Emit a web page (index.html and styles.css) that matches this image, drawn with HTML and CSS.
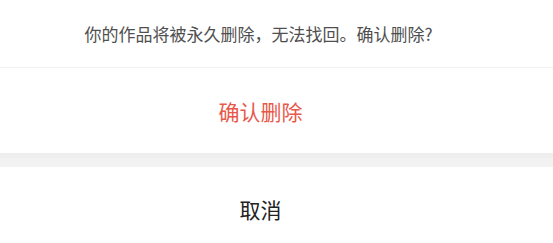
FILE: index.html
```html
<!DOCTYPE html>
<html lang="zh-CN">
<head>
<meta charset="utf-8">
<link rel="stylesheet" href="styles.css">
</head>
<body>
<div class="sheet">
  <div class="message">你的作品将被永久删除，无法找回。确认删除?</div>
  <div class="action danger">确认删除</div>
  <div class="gap"></div>
  <div class="action cancel">取消</div>
</div>
</body>
</html>
```
FILE: styles.css
```css
html, body {
  margin: 0;
  padding: 0;
  background: #fff;
}
.sheet {
  display: flex;
  flex-direction: column;
  font-family: "Noto Sans CJK SC", "Noto Sans", sans-serif;
}
.message {
  height: 67px;
  display: flex;
  align-items: center;
  justify-content: center;
  padding-right: 36px;
  font-size: 17px;
  color: #4f4f4f;
  border-bottom: 1px solid #f1f1f1;
}
.action {
  display: flex;
  align-items: center;
  justify-content: center;
  padding-right: 32px;
  font-size: 21px;
}
.danger {
  height: 85px;
  color: #e8584a;
}
.gap {
  height: 14px;
  background: linear-gradient(#eeeeee 0 5px, #f2f2f2 5px);
}
.cancel {
  height: 84px;
  color: #222;
}
```
